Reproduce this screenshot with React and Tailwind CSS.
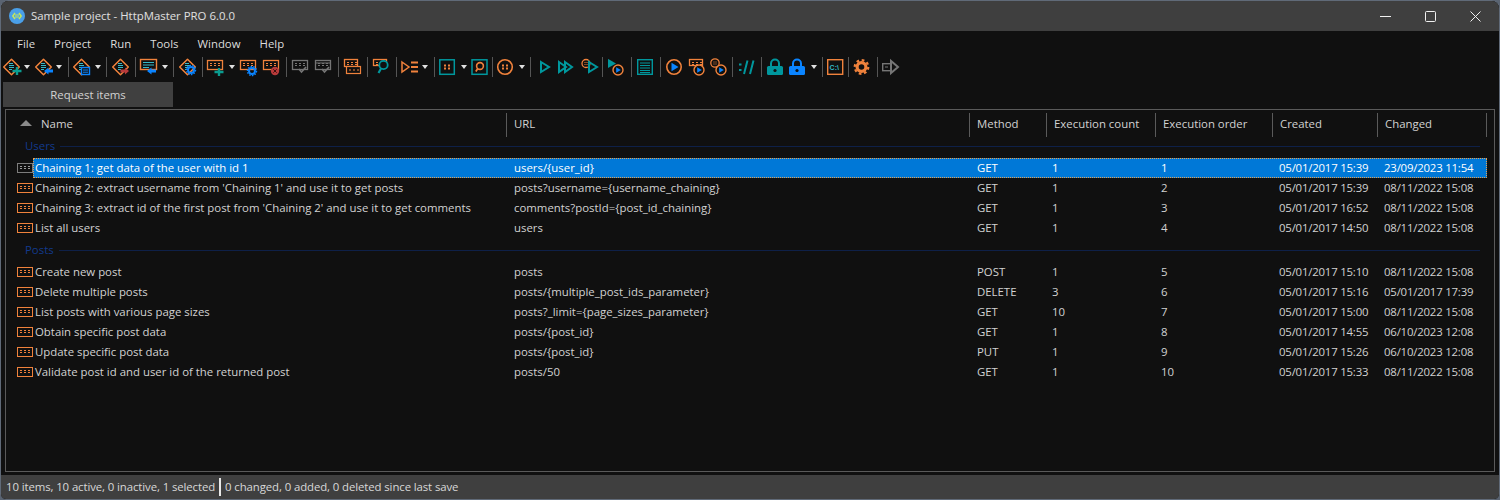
import React from "react";

const G = "#f0823c", T = "#00979d", B = "#0a84ff", GR = "#757575", R = "#b83a3a", C = "#35b7c6";

const Sep = () => <div className="w-px h-[20px] bg-[#555555] mx-[3px] shrink-0" />;
const Caret = ({ w = 10, o = 2 }) => (
  <svg width={w} height="4" viewBox={`0 0 ${w} 4`} className="shrink-0"><path d={`M${o} 0h6l-3 4z`} fill="#e0e0e0" /></svg>
);
const S = ({ w = 22, dx = 0, children }) => (
  <svg width={w} height="22" viewBox={`0 0 ${w} 22`} fill="none" className="shrink-0">
    <g transform={`translate(${dx} 0)`}>{children}</g>
  </svg>
);
const Diamond = () => (
  <g>
    <path d="M8.5 3.2 16.3 11 8.5 18.8 .7 11z" stroke={G} strokeWidth="1.5" strokeLinejoin="round" />
    <path d="M6 7.5h4M6 9.5h5M6 11.5h5M6 13.5h3" stroke={C} strokeWidth="1" />
  </g>
);
const Req = ({ x = 1, y = 4, w = 16, h = 10, c = G }) => (
  <g>
    <rect x={x + 0.5} y={y + 0.5} width={w - 1} height={h - 1} stroke={c} strokeWidth="1.3" />
    <path d={`M${x + 3} ${y + 3.5}h2M${x + 7} ${y + 3.5}h2M${x + 11} ${y + 3.5}h2M${x + 3} ${y + 5.5}h2M${x + 7} ${y + 5.5}h2M${x + 11} ${y + 5.5}h2`} stroke={c} strokeWidth="1" />
  </g>
);
const Plus = ({ x = 14, y = 15 }) => <path d={`M${x - 4.5} ${y}h9M${x} ${y - 4}v8`} stroke="#0a9c90" strokeWidth="2.4" />;
const ArrowL = ({ x = 9, y = 15, c = B }) => <path d={`M${x} ${y}l4.5-3.5v2h4.5v3h-4.5v2z`} fill={c} />;
const ArrowR = ({ x = 9, y = 15, c = R }) => <path d={`M${x + 8} ${y}l-4-3.5v2h-4.5v3h4.5v2z`} fill={c} />;
const Gear = ({ x = 13, y = 15 }) => (
  <g>
    <circle cx={x} cy={y} r="3" stroke={B} strokeWidth="2" />
    <circle cx={x} cy={y} r="4.6" stroke={B} strokeWidth="1.2" strokeDasharray="1.6 1.2" />
  </g>
);
const Play = ({ x = 4, w = 9 }) => <path d={`M${x} 6 L${x + w} 11 L${x} 16z`} stroke={T} strokeWidth="2" />;
const Badge = ({ x = 12, y = 14 }) => (
  <g>
    <circle cx={x} cy={y} r="5" fill="#101010" stroke={G} strokeWidth="1.4" />
    <path d={`M${x - 1.8} ${y - 2.8}l4.6 2.8-4.6 2.8z`} fill={B} />
  </g>
);
const Dots = ({ x, y, c = G }) => (
  <path d={`M${x - 3} ${y - 1.5}h2M${x + 1} ${y - 1.5}h2M${x - 3} ${y + 1.5}h2M${x + 1} ${y + 1.5}h2`} stroke={c} strokeWidth="2" />
);
const Lock = ({ c }) => (
  <S w={22}>
    <path d="M6 10V7.5a4 4 0 0 1 8 0V10" stroke={c} strokeWidth="2" />
    <rect x="2" y="10" width="16" height="9" rx="1.5" fill={c} />
    <circle cx="10" cy="14.5" r="1.6" fill="#101010" />
  </S>
);
const Check = ({ x = 9 }) => <path d={`M${x} 13l2.5 3 4.5-5`} stroke={GR} strokeWidth="1.7" />;

const columns = [
  { label: "Name", w: "w-[500px]", sort: true },
  { label: "URL", w: "w-[463px]" },
  { label: "Method", w: "w-[77px]" },
  { label: "Execution count", w: "w-[109px]" },
  { label: "Execution order", w: "w-[117px]" },
  { label: "Created", w: "w-[105px]" },
  { label: "Changed", w: "w-[109px]" },
];

const groups = [
  {
    name: "Users",
    rows: [
      ["Chaining 1: get data of the user with id 1", "users/{user_id}", "GET", "1", "1", "05/01/2017 15:39", "23/09/2023 11:54", true],
      ["Chaining 2: extract username from 'Chaining 1' and use it to get posts", "posts?username={username_chaining}", "GET", "1", "2", "05/01/2017 15:39", "08/11/2022 15:08"],
      ["Chaining 3: extract id of the first post from 'Chaining 2' and use it to get comments", "comments?postId={post_id_chaining}", "GET", "1", "3", "05/01/2017 16:52", "08/11/2022 15:08"],
      ["List all users", "users", "GET", "1", "4", "05/01/2017 14:50", "08/11/2022 15:08"],
    ],
  },
  {
    name: "Posts",
    rows: [
      ["Create new post", "posts", "POST", "1", "5", "05/01/2017 15:10", "08/11/2022 15:08"],
      ["Delete multiple posts", "posts/{multiple_post_ids_parameter}", "DELETE", "3", "6", "05/01/2017 15:16", "05/01/2017 17:39"],
      ["List posts with various page sizes", "posts?_limit={page_sizes_parameter}", "GET", "10", "7", "05/01/2017 15:00", "08/11/2022 15:08"],
      ["Obtain specific post data", "posts/{post_id}", "GET", "1", "8", "05/01/2017 14:55", "06/10/2023 12:08"],
      ["Update specific post data", "posts/{post_id}", "PUT", "1", "9", "05/01/2017 15:26", "06/10/2023 12:08"],
      ["Validate post id and user id of the returned post", "posts/50", "GET", "1", "10", "05/01/2017 15:33", "08/11/2022 15:08"],
    ],
  },
];

const RowIcon = ({ sel }) => {
  const c = sel ? "#7c7c7c" : G;
  return (
    <svg width="16" height="10" viewBox="0 0 16 10" fill="none" className="shrink-0">
      <rect x="0.5" y="0.5" width="15" height="9" stroke={c} />
      <path d="M3 3.5h2M7 3.5h2M11 3.5h2M3 5.5h2M7 5.5h2M11 5.5h2" stroke={sel ? "#9a9a9a" : G} />
    </svg>
  );
};

const Row = ({ r }) => {
  const sel = r[7];
  return (
    <div className="relative flex h-5 items-center">
      <div className="absolute left-[11px] top-[5px] flex"><RowIcon sel={sel} /></div>
      <div className={`flex h-5 items-center ml-[27px] w-[1454px] ${sel ? "bg-[#0078d7] outline-1 -outline-offset-1 outline-dotted outline-[#e8a050] text-white" : ""}`}>
        <div className="w-[481px] pl-[2px] truncate">{r[0]}</div>
        <div className="w-[463px]">{r[1]}</div>
        <div className="w-[75px]">{r[2]}</div>
        <div className="w-[109px]">{r[3]}</div>
        <div className="w-[118px]">{r[4]}</div>
        <div className="w-[105px] tracking-[-0.2px]">{r[5]}</div>
        <div className="w-[103px] tracking-[-0.2px]">{r[6]}</div>
      </div>
    </div>
  );
};

const Toolbar = () => (
  <div className="h-[24px] flex items-center pl-px shrink-0">
    <S w={20}><g transform="translate(1 0)"><Diamond /><Plus /></g></S><Caret w={12} />
    <S w={20}><g transform="translate(1 0)"><Diamond /><ArrowL /></g></S><Caret w={11} />
    <Sep />
    <S w={21}><g transform="translate(1 0)"><Diamond /><rect x="8.5" y="11.5" width="8" height="7" fill="#101010" stroke={B} strokeWidth="1.4" /><path d="M10 14h5M10 16.2h5" stroke={B} /></g></S><Caret />
    <Sep />
    <S dx={2}><Diamond /><ArrowR /></S>
    <Sep />
    <S w={21}>
      <rect x="1.5" y="3.5" width="16" height="10" stroke={G} strokeWidth="1.4" />
      <path d="M4 6.5h11M4 9h11M4 11.5h6" stroke={C} />
      <ArrowL x={8} y={15} />
    </S><Caret />
    <Sep />
    <S dx={2}><Diamond /><Gear x={12} y={14} /></S>
    <Sep />
    <S w={21}><Req /><Plus x={13} y={16} /></S><Caret w={12} />
    <S w={23}><Req /><Gear x={13} y={15} /></S>
    <S w={21}><Req /><circle cx="13" cy="15" r="4.2" fill={R} /><path d="M11.3 13.3l3.4 3.4m0-3.4l-3.4 3.4" stroke="#3a1010" /></S>
    <Sep />
    <S><Req x={2} c={GR} /><Check x={9} /></S>
    <S w={23}><Req x={3} c={GR} /><path d="M3 7h16" stroke={GR} /><Check x={10} /></S>
    <Sep />
    <S>
      <Req x={2} y={3} w={14} h={8} />
      <rect x="4.5" y="10.5" width="14" height="7" fill="#101010" stroke={G} strokeWidth="1.2" />
      <path d="M7 14h2M11 14h2M15 14h2" stroke={G} />
    </S>
    <Sep />
    <S>
      <Req x={2} y={3} w={14} h={7} />
      <circle cx="12.5" cy="9" r="4.2" fill="#101010" stroke={T} strokeWidth="1.8" />
      <path d="M10 12.5 7.5 17" stroke={T} strokeWidth="2.2" />
    </S>
    <Sep />
    <S w={20}>
      <path d="M2 6l7 5-7 5z" stroke={G} strokeWidth="1.5" />
      <path d="M11 6.5h7M11 11h7M11 15.5h7" stroke={G} strokeWidth="2" />
    </S><Caret w={11} />
    <Sep />
    <S w={23}>
      <rect x="1.8" y="3.8" width="14.5" height="14.5" stroke={T} strokeWidth="1.5" />
      <Dots x={9} y={11} />
    </S><Caret o={0} />
    <S w={18}>
      <rect x="1" y="3.8" width="15" height="14.5" stroke={T} strokeWidth="1.5" />
      <circle cx="9" cy="10" r="3.4" stroke={G} strokeWidth="1.6" />
      <path d="M6.8 12.6 4.8 15.5" stroke={G} strokeWidth="1.8" />
    </S>
    <Sep />
    <S>
      <circle cx="9" cy="11" r="7.3" stroke={G} strokeWidth="1.6" />
      <Dots x={9} y={11} />
    </S><Caret w={9} o={1} />
    <Sep />
    <S w={20}><Play x={7} w={8} /></S>
    <S w={20}><Play x={5} w={7} /><Play x={11} w={7} /></S>
    <S w={25}><circle cx="12" cy="7.5" r="4" stroke={G} strokeWidth="1.3" /><path d="M10.5 6.5h3M10.5 8.5h3" stroke={G} strokeDasharray="1 1" /><Play x={15} w={8} /></S>
    <Sep />
    <S><path d="M2 3h.2L10 7.5 2 12z" fill={T} /><Badge x={12} y={14} /></S>
    <Sep />
    <S>
      <rect x="2.7" y="3.7" width="14.6" height="14.6" stroke={T} strokeWidth="1.4" />
      <path d="M5 7h10M5 9.5h10M5 12h10M5 14.5h10M5 16.5h10" stroke={T} />
    </S>
    <Sep />
    <S>
      <circle cx="10" cy="11" r="7.2" stroke={G} strokeWidth="1.6" />
      <path d="M7.5 6.8 14.5 11l-7 4.2z" fill={B} />
    </S>
    <S><Req x={3} y={3} w={14} h={7} /><Badge x={13} y={14} /></S>
    <S w={21}><circle cx="7" cy="7" r="4.2" stroke={G} strokeWidth="1.3" /><path d="M5.5 6h3M5.5 8h3" stroke={G} strokeDasharray="1 1" /><Badge x={13} y={14} /></S>
    <Sep />
    <S>
      <path d="M3 8.5h2.5M3 14h2.5" stroke={T} strokeWidth="2.2" />
      <path d="M11.5 4.5 8 18M17.5 4.5 14 18" stroke={T} strokeWidth="2" />
    </S>
    <Sep />
    <Lock c={T} />
    <Lock c={B} /><Caret />
    <Sep />
    <S w={19}>
      <rect x="1.7" y="3.7" width="15" height="14.6" stroke={G} strokeWidth="1.4" />
      <text x="3.6" y="14" fontSize="7" fontWeight="700" fill={C} fontFamily="Liberation Sans">C:\</text>
    </S>
    <Sep />
    <S>
      <circle cx="9.5" cy="11" r="4.4" stroke={G} strokeWidth="3.2" />
      <circle cx="9.5" cy="11" r="6.8" stroke={G} strokeWidth="2.2" strokeDasharray="2.7 2.64" />
    </S>
    <Sep />
    <S w={20}>
      <rect x="1.7" y="7.7" width="8" height="7" stroke={GR} strokeWidth="1.4" />
      <path d="M4 11h3" stroke={GR} />
      <path d="M10 5v12l7-6z" stroke={GR} strokeWidth="2" />
    </S>
  </div>
);

export default function App() {
  return (
    <div className="w-[1500px] h-[500px] overflow-hidden bg-[#5a6472]">
      <div className="w-[1500px] h-[500px] flex flex-col rounded-t-[8px] rounded-b-[6px] border border-[#606a78] bg-[#101010] text-[#d2d2d2] text-[11.4px] overflow-hidden font-['Open_Sans','Noto_Sans',sans-serif]">
        <div className="h-[30px] bg-[#3f3f3f] flex items-center shrink-0">
          <svg width="16" height="16" viewBox="0 0 16 16" fill="none" className="ml-[8px]">
            <circle cx="8" cy="8" r="8" fill="#4a9fe8" />
            <path d="M6 5 3.8 8 6 11M10 5l2.2 3L10 11" stroke="#c8e85a" strokeWidth="1.4" />
            <path d="M6 7h4M6 9h4" stroke="#c8e85a" />
          </svg>
          <span className="ml-[6px] text-[#e0e0e0]">Sample project - HttpMaster PRO 6.0.0</span>
          <div className="ml-auto flex items-center h-full pr-px">
            <div className="w-[45px] flex justify-center"><svg width="11" height="11" viewBox="0 0 11 11"><path d="M0 5.5h11" stroke="#f0f0f0" /></svg></div>
            <div className="w-[45px] flex justify-center"><svg width="11" height="11" viewBox="0 0 11 11" fill="none"><rect x=".5" y=".5" width="10" height="10" rx="1" stroke="#f0f0f0" /></svg></div>
            <div className="w-[45px] flex justify-center"><svg width="11" height="11" viewBox="0 0 11 11"><path d="M.5.5l10 10m0-10l-10 10" stroke="#f0f0f0" /></svg></div>
          </div>
        </div>
        <div className="h-[24px] flex items-center pl-[16px] gap-[19px] shrink-0 pt-[1px] text-[#dcdcdc]">
          <span>File</span><span>Project</span><span>Run</span><span>Tools</span><span>Window</span><span>Help</span>
        </div>
        <Toolbar />
        <div className="h-[30px] shrink-0 pt-[3px] pl-[2px]">
          <div className="w-[170px] h-[25px] bg-[#404040] flex items-center justify-center">Request items</div>
        </div>
        <div className="flex-1 mx-[4px] border border-[#5a5a5a] min-h-0">
          <div className="flex h-[27px] items-end pl-px">
            {columns.map((c, i) => (
              <div key={c.label} className={`${c.w} h-[24px] flex items-center pb-[2px] border-r border-[#5a5a5a] ${i === 0 ? "pl-[34px] relative" : "pl-[7px]"}`}>
                {c.sort && <svg width="12" height="6" viewBox="0 0 12 6" className="absolute left-[13px] top-[7px]"><path d="M0 6 6 0l6 6z" fill="#8a8a8a" /></svg>}
                {c.label}
              </div>
            ))}
          </div>
          <div>
            {groups.map((g, gi) => (
              <div key={g.name} className={gi ? "pt-[3px]" : ""}>
                <div className="h-[18px] flex items-center pl-[19px] text-[#123a8c] mb-[3px]">
                  {g.name}
                  <div className="flex-1 h-px bg-[#0e2048] ml-[5px] mr-[14px]" />
                </div>
                {g.rows.map((r) => <Row key={r[0]} r={r} />)}
              </div>
            ))}
          </div>
        </div>
        <div className="h-[24px] shrink-0 bg-[#3f3f3f] flex items-center pl-[5px] mt-[3px] text-[#d8d8d8] tracking-[-0.1px]">
          <span>10 items, 10 active, 0 inactive, 1 selected</span>
          <div className="w-[2px] h-[18px] bg-[#e8e8e8] mx-[4px]" />
          <span>0 changed, 0 added, 0 deleted since last save</span>
        </div>
      </div>
    </div>
  );
}
